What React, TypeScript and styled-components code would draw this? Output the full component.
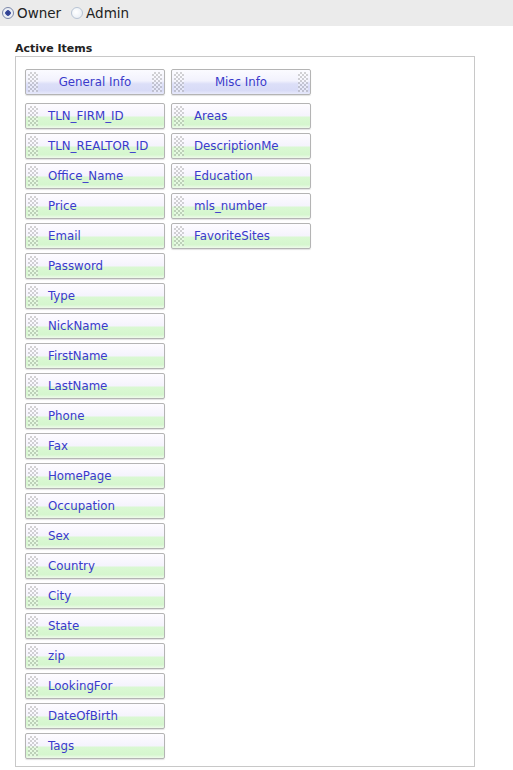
import React from "react";
import styled, { createGlobalStyle } from "styled-components";

const Global = createGlobalStyle`
  html, body { margin: 0; padding: 0; background: #fff; }
  body { font-family: "DejaVu Sans", Verdana, sans-serif; }
`;

const TopBar = styled.div`
  height: 26px;
  background: #ebebeb;
  display: flex;
  align-items: center;
  padding-left: 2px;
  gap: 10px;
  font-size: 13.5px;
  color: #222;
`;

const RadioLabel = styled.label`
  display: flex;
  align-items: center;
  gap: 3px;
`;

const RadioDot = styled.span<{ $on?: boolean }>`
  width: 12px;
  height: 12px;
  border-radius: 50%;
  box-sizing: border-box;
  border: 1px solid ${(p) => (p.$on ? "#7a86a8" : "#b8c4d4")};
  background: ${(p) =>
    p.$on
      ? "radial-gradient(circle, #2a3a8a 0, #3b4c9e 2.5px, #e8ecf4 3px, #f4f6fa 100%)"
      : "radial-gradient(circle at 40% 40%, #ffffff 0, #e4eaf2 100%)"};
`;

const Section = styled.div`
  padding: 16px 38px 0 15px;
`;

const Title = styled.div`
  font-weight: bold;
  font-size: 11px;
  color: #222;
  line-height: 14px;
`;

const Box = styled.div`
  border: 1px solid #c8c8c8;
  display: flex;
  gap: 6px;
  padding: 12px 0 7px 9px;
`;

const Column = styled.div`
  display: flex;
  flex-direction: column;
  gap: 4px;
  width: 140px;
`;

const checker = `repeating-conic-gradient(rgba(150,150,150,0.4) 0% 25%, rgba(255,255,255,0.35) 0% 50%) 0 0 / 4px 4px`;

const Handle = styled.span`
  position: absolute;
  top: 2px;
  bottom: 2px;
  width: 10px;
  background: ${checker};
`;

const Btn = styled.div<{ $header?: boolean }>`
  position: relative;
  box-sizing: border-box;
  height: 26px;
  border: 1px solid #b4b4b4;
  border-radius: 2px;
  box-shadow: 0 1px 1px rgba(0, 0, 0, 0.12);
  font-size: 11.8px;
  color: #3a3acb;
  display: flex;
  align-items: center;
  justify-content: ${(p) => (p.$header ? "center" : "flex-start")};
  padding-left: ${(p) => (p.$header ? "0" : "22px")};
  margin-bottom: ${(p) => (p.$header ? "4px" : "0")};
  background: ${(p) =>
    p.$header
      ? "linear-gradient(to bottom, #fbfbff 0%, #f2f2fd 45%, #dcdff8 58%, #d8dbf7 85%, #e8eafb 100%)"
      : "linear-gradient(to bottom, #fdfcff 0%, #f5f3fd 48%, #daf8d3 56%, #d5f6ce 86%, #eefbea 100%)"};
  & > ${Handle}.left { left: 2px; }
  & > ${Handle}.right { right: 2px; }
`;

const Label = styled.span`
  line-height: 1;
  padding-top: 1px;
`;

const left = [
  "TLN_FIRM_ID",
  "TLN_REALTOR_ID",
  "Office_Name",
  "Price",
  "Email",
  "Password",
  "Type",
  "NickName",
  "FirstName",
  "LastName",
  "Phone",
  "Fax",
  "HomePage",
  "Occupation",
  "Sex",
  "Country",
  "City",
  "State",
  "zip",
  "LookingFor",
  "DateOfBirth",
  "Tags",
];
const right = ["Areas", "DescriptionMe", "Education", "mls_number", "FavoriteSites"];

function Col({ head, items }: { head: string; items: string[] }) {
  return (
    <Column>
      <Btn $header>
        <Handle className="left" />
        <Label>{head}</Label>
        <Handle className="right" />
      </Btn>
      {items.map((t) => (
        <Btn key={t}>
          <Handle className="left" />
          <Label>{t}</Label>
        </Btn>
      ))}
    </Column>
  );
}

export default function App() {
  return (
    <>
      <Global />
      <TopBar>
        <RadioLabel>
          <RadioDot $on />
          Owner
        </RadioLabel>
        <RadioLabel>
          <RadioDot />
          Admin
        </RadioLabel>
      </TopBar>
      <Section>
        <Title>Active Items</Title>
        <Box>
          <Col head="General Info" items={left} />
          <Col head="Misc Info" items={right} />
        </Box>
      </Section>
    </>
  );
}
